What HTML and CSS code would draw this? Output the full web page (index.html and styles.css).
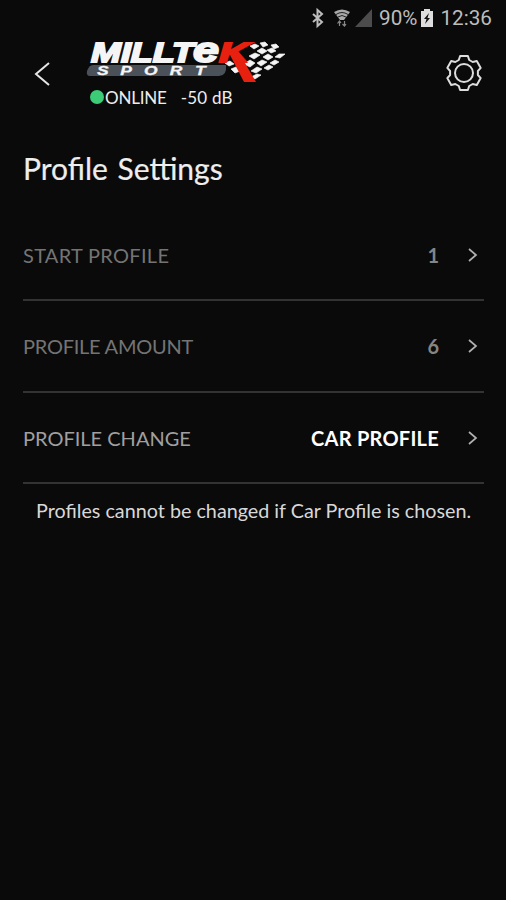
FILE: index.html
```html
<!DOCTYPE html>
<html lang="en">
<head>
<meta charset="utf-8">
<title>Profile Settings</title>
<link rel="stylesheet" href="styles.css">
</head>
<body>
<div class="statusbar">
  <svg class="bt" width="14" height="18" viewBox="0 0 14 18"><path d="M2 5l9 8-4.500 4V1L11 5l-9 8"/></svg>
  <svg class="wifi" width="16" height="18" viewBox="0 0 16 18"><path class="fan" d="M0 3Q8-2 16 3L10 11H6z"/><path d="M2 5.500q6-4 12 0M4 8q4-3 8 0"/><path class="arrows" d="M5.500 12v5M3.500 14.500L5.500 12l1.500 2M10.500 12v5M8.500 15l2 2 1.500-2"/></svg>
  <svg class="signal" width="18" height="18" viewBox="0 0 18 18"><path d="M17 0v18H0z"/></svg>
  <span class="percent">90%</span>
  <svg class="battery" width="12" height="18" viewBox="0 0 12 18"><path class="cell" d="M0 2h3V0h6v2h3v16H0z"/><path class="bolt" d="M8 4L3 10h2.500L4 15l5-6H6.500z"/></svg>
  <span class="clock">12:36</span>
</div>
<header class="header">
  <svg class="back" width="18" height="26" viewBox="0 0 18 26"><path d="M15 2L2 13l13 11"/></svg>
  <div class="brand">
    <svg class="logo" width="205" height="48" viewBox="84 36 205 48">
      <g class="flag">
        <path d="M250 46l5-2 4 2-5 3zM260 43l5-1 3 3-5 2zM271 45l5-1 3 3-5 2zM257 51l5-3 5 3-5 3zM267 50l5-2 4 3-5 2zM279 54l6 0-5 4-5-1zM249 56l6-3 5 2-6 4zM263 57l5-3 5 3-5 3zM270 63l5-3 4 2-5 3zM244 64l6-4 5 3-5 4zM257 63l5-3 5 2-6 4zM251 71l6-4 5 2-6 4zM264 68l5-3 4 2-5 3zM251 77l6-3 4 1-6 4zM225 63l5-2 4 3-5 2zM231 69l5-2 4 4-5 2zM236 62l4-2 4 4-4 3z"/>
      </g>
      <path class="plate" d="M93 65H226Q227 76 219 76H90Q86 76 87 71Q89 65 93 65z"/>
      <text class="name" x="91" y="61.500" textLength="103" lengthAdjust="spacingAndGlyphs">MILLT</text>
      <text class="name name-e" x="193" y="61.500" textLength="26" lengthAdjust="spacingAndGlyphs">e</text>
      <text class="sport" transform="scale(1.450 1)" x="66.900 83 99.300 117 134.500" y="74.700">SPORT</text>
      <path class="tail" d="M229 53l9-2L256 82H244z"/>
      <text class="name name-k" x="219" y="61.500" textLength="30" lengthAdjust="spacingAndGlyphs">K</text>
    </svg>
    <div class="connection"><i class="dot"></i><span class="online">ONLINE</span><span class="level">-50 dB</span></div>
  </div>
  <svg class="gear" width="38" height="38" viewBox="0 0 38 38"><circle cx="19" cy="19" r="9"/><path d="M13.800 6L15.100 2H22.900L24.200 6L27.700 8L31.800 7.100L35.700 13.900L32.900 17V21L35.700 24.100L31.800 30.900L27.700 30L24.200 32L22.900 36H15.100L13.800 32L10.300 30L6.200 30.900L2.300 24.100L5.100 21V17L2.300 13.900L6.200 7.100L10.300 8Z"/></svg>
</header>
<main class="content">
  <h1 class="title">Profile Settings</h1>
  <div class="row dim"><span class="label l1">START PROFILE</span><span class="value">1</span><svg class="chev" width="10" height="14" viewBox="0 0 10 14"><path d="M1 1l7 6-7 6"/></svg></div>
  <div class="row dim"><span class="label l2">PROFILE AMOUNT</span><span class="value">6</span><svg class="chev" width="10" height="14" viewBox="0 0 10 14"><path d="M1 1l7 6-7 6"/></svg></div>
  <div class="row"><span class="label l3">PROFILE CHANGE</span><span class="value v3">CAR PROFILE</span><svg class="chev" width="10" height="14" viewBox="0 0 10 14"><path d="M1 1l7 6-7 6"/></svg></div>
  <p class="note">Profiles cannot be changed if Car Profile is chosen.</p>
</main>
</body>
</html>
```
FILE: styles.css
```css
* { box-sizing: border-box; }
body { margin: 0; width: 506px; height: 900px; overflow: hidden; background: #0a0a0a; color: #eee; font-family: Lato, sans-serif; }
svg { display: block; flex: none; fill: none; overflow: visible; }
.statusbar { display: flex; justify-content: flex-end; align-items: center; height: 36px; padding-right: 14px; font: 20.7px/36px Roboto, sans-serif; color: #bdbdbd; }
.bt { margin-right: 9px; stroke: #bdbdbd; stroke-width: 2; }
.wifi { margin-right: 5px; stroke: #222; stroke-width: 1; }
.fan { fill: #aaa; stroke: none; }
.arrows { stroke: #888; stroke-width: 1.2; }
.signal { margin-right: 6px; fill: #4c4c4c; }
.percent { margin-right: 4px; }
.battery { margin-right: 7px; }
.cell { fill: #ddd; }
.bolt { fill: #111; }
.header { display: flex; height: 74px; padding: 0 23px 0 34px; }
.back { margin: 25px 32px 0 0; stroke: #e6e6e6; stroke-width: 2; }
.brand { flex: 1; }
.plate { fill: #4a5158; }
.name { font: italic 900 28px "Liberation Sans", sans-serif; fill: #f5f5f5; stroke: #f5f5f5; stroke-width: 1.8; }
.name-e { font-size: 35px; }
.name-k { fill: #e8200f; stroke: #e8200f; }
.tail { fill: #e8200f; }
.sport { font: italic bold 12px "Liberation Sans", sans-serif; fill: #f5f5f5; stroke: #f5f5f5; stroke-width: .3; }
.flag { fill: #f5f5f5; stroke: #f5f5f5; stroke-width: .7; }
.connection { display: flex; align-items: center; height: 26px; padding-left: 6px; font-size: 17px; letter-spacing: -.2px; }
.dot { width: 14px; height: 14px; border-radius: 50%; background: #3ccb77; margin-right: 1px; }
.level { margin-left: 14px; letter-spacing: .2px; }
.gear { margin-top: 18px; stroke: #ddd; stroke-width: 2; stroke-linejoin: round; }
.content { padding: 0 22px 0 23px; }
.title { margin: 38px 0 0; height: 61.5px; font-size: 30px; line-height: 40px; font-weight: 400; word-spacing: 2px; -webkit-text-stroke: .2px; }
.row { display: flex; align-items: center; height: 91.5px; padding: 1px 6px 0 0; border-bottom: 2px solid #333; font-size: 20px; }
.label { flex: 1; color: #a0a0a0; }
.l1 { letter-spacing: .3px; }
.l2 { letter-spacing: -.25px; }
.dim .label { color: #747474; }
.value { font-weight: 700; color: #fff; margin-right: 29px; }
.v3 { letter-spacing: .25px; }
.dim .value { color: #858585; }
.chev { stroke: #b0b0b0; stroke-width: 1.7; }
.note { margin: 11.5px 0 0 13px; font-size: 19.75px; line-height: 30px; white-space: nowrap; color: #d8d8d8; }
```
